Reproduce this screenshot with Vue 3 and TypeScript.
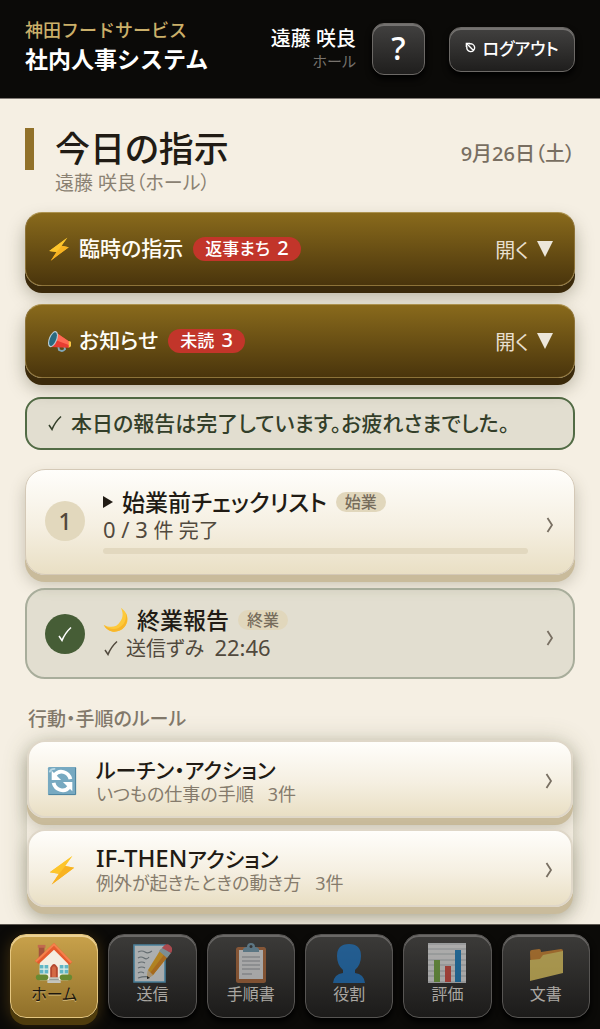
<script setup lang="ts">
import { ref } from 'vue'

interface Part { text: string; latin?: boolean }
interface Notice { icon: string; title: string; badge: string; count: number }
interface Rule { icon: string; title: Part[]; note: string; count: number }
interface Tab { icon: string; label: string }

const notices: Notice[] = [
  { icon: 'bolt', title: '臨時の指示', badge: '返事まち', count: 2 },
  { icon: 'horn', title: 'お知らせ', badge: '未読', count: 3 },
]
const rules: Rule[] = [
  { icon: 'cycle', title: [{ text: 'ルーチン・アクション' }], note: 'いつもの仕事の手順', count: 3 },
  { icon: 'bolt', title: [{ text: 'IF-THEN', latin: true }, { text: 'アクション' }], note: '例外が起きたときの動き方', count: 3 },
]
const tabs: Tab[] = [
  { icon: 'house', label: 'ホーム' },
  { icon: 'memo', label: '送信' },
  { icon: 'clip', label: '手順書' },
  { icon: 'person', label: '役割' },
  { icon: 'chart', label: '評価' },
  { icon: 'folder', label: '文書' },
]
const active = ref<string>('house')
const progress = ref<number>(0)
</script>

<template>
  <svg class="defs" aria-hidden="true">
    <linearGradient id="boltFill" x1="0" y1="0" x2="0" y2="1">
      <stop offset="0" stop-color="#ffd83a" /><stop offset="1" stop-color="#f9a51c" />
    </linearGradient>
    <symbol id="bolt" viewBox="0 0 32 32">
      <path d="M27 1 3 18.500l9.500 1.500L5 31.500l24-18-9.500-1.700z" fill="url(#boltFill)" />
      <path d="M27 1 12.500 20 3 18.500z" fill="#fdc52b" /><path d="M19.500 11.800 29 13.500 5 31.500z" fill="#f8b321" />
    </symbol>
    <symbol id="horn" viewBox="0 0 32 32">
      <path d="m15 23 1 5q5 3 8-1l-1-4" fill="none" stroke="#83a8b8" stroke-width="2.500" />
      <path d="M9 3 30 17q3 5-1 8L5 24z" fill="#e83d32" />
      <path d="M14 6 30 17q2 3 1 5L12 15z" fill="#ff6a54" />
      <ellipse cx="8" cy="13.500" rx="5.500" ry="11.500" transform="rotate(22 8 13.500)" fill="#b9cdd5" />
      <ellipse cx="8" cy="13.500" rx="4" ry="9.700" transform="rotate(22 8 13.500)" fill="#296a80" />
      <path d="m29 16 3 1v6l-3 2z" fill="#f7c343" />
    </symbol>
    <symbol id="moon" viewBox="0 0 32 32">
      <path d="M22 1c9 6 11 17 4 24-7 8-20 7-25-3 8 4 16 3 20-4 4-5 4-11 1-17z" fill="#fdc93b" />
      <path d="M28 7c3 7 2 13-2 18-7 8-20 7-25-3 8 7 17 6 22 1 5-4 6-10 5-16z" fill="#f8b62a" />
    </symbol>
    <symbol id="cycle" viewBox="0 0 32 32">
      <rect x="1" y="1" width="30" height="30" rx="1.500" fill="#77a9c1" />
      <path d="M1.500 30.500h29v-29" fill="none" stroke="#49809b" />
      <path d="M3 6q1-3 5-3" fill="none" stroke="#b9d8e4" stroke-width="2" stroke-linecap="round" />
      <path d="M25 14c-2-8-12-11-17-4M7 18c2 8 12 11 17 4" fill="none" stroke="#fff" stroke-width="4" />
      <path d="M5 5v10h10zM27 27V17H17z" fill="#fff" />
    </symbol>
    <symbol id="house" viewBox="0 0 40 42">
      <path d="M4 3h6v14H4z" fill="#a3523c" /><path d="M3 2h8v3H3z" fill="#c26a4e" />
      <path d="M5 19 20 4l15 16v19H5z" fill="#f4eee1" />
      <path d="M20 0 39 20l-3 3L20 7 4 22l-4-3z" fill="#e65b2e" /><path d="M20 0 39 20l-2 1L20 3 2 20l-2-1z" fill="#f4824c" />
      <path d="M5 23h9v9H5zM26 23h9v9h-9z" fill="#61b6c5" />
      <path d="M9.500 23v9M5 27.500h9M30.500 23v9M26 27.500h9" stroke="#e4f2e9" stroke-width="1.200" />
      <path d="M16 37V26q4-8 8 0v11z" fill="#b5492f" /><path d="M18 36V26q2-3 4 0v10z" fill="#d46a45" />
      <rect x="1" y="33" width="13" height="6" rx="3" fill="#688a32" /><rect x="26" y="33" width="13" height="6" rx="3" fill="#688a32" />
      <path d="M15 36h10v3h2v3H13v-3h2z" fill="#c4c5bd" /><path d="M15 38.500h10" stroke="#8d9490" />
    </symbol>
    <symbol id="memo" viewBox="0 0 40 40">
      <path d="M2 2h31v37H2z" fill="#f6fbfd" stroke="#56aedb" stroke-width="1.600" />
      <path d="M6 9q4-2 7 0t7-1M6 15q3-2 6 0t5-1M6 20q4-2 7 0M6 25q4-2 7 0M6 30q3-2 6 0M6 35q6-2 12-1" stroke="#84929a" stroke-width="1.200" fill="none" />
      <path d="m29 6 8 6-16 20-6 4 1-9z" fill="#ffb51b" /><path d="m34 9 3 3-16 20-3-2z" fill="#ef8f18" />
      <path d="m16 27 5 5-6 4z" fill="#efcfa0" /><path d="m15 33 3 2-3 1z" fill="#222" />
      <path d="m27 8 4-4 8 6-4 5z" fill="#a7c6d0" /><path d="M30 5q4-6 8-2.500 4 3 1 7.500z" fill="#ef5660" />
    </symbol>
    <symbol id="clip" viewBox="0 0 40 40">
      <rect x="5" y="4" width="30" height="36" rx="2.500" fill="#b66b39" /><path d="M8 7h24v29H8z" fill="#f0f1f2" />
      <path d="M11 14h18M11 18h18M11 22h18M11 26h18M11 31h10" stroke="#9aa0a6" stroke-width="1.200" />
      <path d="M12 9V6q1-2 4-2 0-4 4-4t4 4q3 0 4 2v3z" fill="#729eb5" /><circle cx="20" cy="3.500" r="1.500" fill="#333" />
    </symbol>
    <symbol id="person" viewBox="0 0 40 40">
      <path d="M8 13Q8 1 20 1t12 12q0 9-6 14v3q9 1 10 10H4q1-9 10-10v-3q-6-5-6-14z" fill="#1976c9" />
    </symbol>
    <symbol id="chart" viewBox="0 0 40 40">
      <path d="M1 0h38v40H1z" fill="#f3f3f3" /><path d="M1 1h38M1 6h38M1 11h38M1 17h38M1 22h38M1 28h38M1 33h38M1 39h38" stroke="#b9c0c4" />
      <path d="M7 17h6v22H7z" fill="#78ae3f" /><path d="M18 23h6v16h-6z" fill="#e04a3f" /><path d="M28 7h6v32h-6z" fill="#1883c9" />
    </symbol>
    <symbol id="folder" viewBox="0 0 40 40">
      <path d="M4 9q0-2 2-2l7-1q2 0 2 3l20-3q2 0 2 2v20L5 37z" fill="#d9882b" />
      <path d="m4 17 10-1 3-4 20-4v22L4 38z" fill="#eed261" />
    </symbol>
  </svg>

  <div class="page">
    <header class="top">
      <div class="brand">
        <div class="company">神田フードサービス</div>
        <div class="system">社内人事システム</div>
      </div>
      <div class="who">
        <div class="name">遠藤 咲良</div>
        <div class="role">ホール</div>
      </div>
      <button class="dark help" type="button" aria-label="ヘルプ">?</button>
      <button class="dark logout" type="button">
        <svg viewBox="0 0 12 12" aria-hidden="true"><path d="M4.500 2.300A4.300 4.300 0 1 1 2.300 4.500M2 2l7 7M1.500 5.500v-4h4" /></svg>
        ログアウト
      </button>
    </header>

    <main>
      <div class="heading">
        <div>
          <h1>今日の指示</h1>
          <p class="sub">遠藤 咲良（ホール）</p>
        </div>
        <time datetime="09-26">9月26日（土）</time>
      </div>

      <div class="notices">
        <button v-for="n in notices" :key="n.title" class="gold" type="button" aria-expanded="false">
          <svg class="lead" aria-hidden="true"><use :href="'#' + n.icon" /></svg>
          <span class="gold-title">{{ n.title }}</span>
          <span class="badge">{{ n.badge }} <span class="count">{{ n.count }}</span></span>
          <span class="open">開く <svg viewBox="0 0 16 16" aria-hidden="true"><path d="M0 0h16L8 16z" /></svg></span>
        </button>
      </div>

      <p class="status">
        <svg class="tick" viewBox="0 0 16 16" aria-hidden="true"><path d="m2 10 3 4.500Q8 7 14 1.500" /></svg>
        本日の報告は完了しています。お疲れさまでした。
      </p>

      <div class="tasks">
        <button class="task raised" type="button">
          <span class="num">1</span>
          <span class="body">
            <span class="task-title">
              <svg class="play" viewBox="0 0 10 12" aria-hidden="true"><path d="M0 0v12l10-6z" /></svg>
              始業前チェックリスト<span class="tag">始業</span>
            </span>
            <span class="detail"><span><span class="figure">0 / 3 </span>件 完了</span></span>
            <span class="track"><span class="fill" :style="{ width: progress + '%' }"></span></span>
          </span>
          <svg class="chev" viewBox="0 0 8 16" aria-hidden="true"><path d="m1.500 1 4.500 7-4.500 7" /></svg>
        </button>
        <button class="task done" type="button">
          <span class="num ok"><svg class="tick" viewBox="0 0 16 16" aria-hidden="true"><path d="m2 10 3 4.500Q8 7 14 1.500" /></svg></span>
          <span class="body">
            <span class="task-title">
              <svg class="moon" aria-hidden="true"><use href="#moon" /></svg>
              終業報告<span class="tag">終業</span>
            </span>
            <span class="detail"><svg class="tick" viewBox="0 0 16 16" aria-hidden="true"><path d="m2 10 3 4.500Q8 7 14 1.500" /></svg><span>送信ずみ&nbsp; <span class="figure">22:46</span></span></span>
          </span>
          <svg class="chev" viewBox="0 0 8 16" aria-hidden="true"><path d="m1.500 1 4.500 7-4.500 7" /></svg>
        </button>
      </div>

      <section class="rules">
        <h2>行動・手順のルール</h2>
        <div class="list">
          <button v-for="r in rules" :key="r.note" class="rule raised" type="button">
            <svg class="rule-icon" aria-hidden="true"><use :href="'#' + r.icon" /></svg>
            <span class="body">
              <span class="rule-title"><span v-for="p in r.title" :key="p.text" :class="{ latin: p.latin }">{{ p.text }}</span></span>
              <span class="note">{{ r.note }}&nbsp;&nbsp; {{ r.count }}件</span>
            </span>
            <svg class="chev" viewBox="0 0 8 16" aria-hidden="true"><path d="m1.500 1 4.500 7-4.500 7" /></svg>
          </button>
        </div>
      </section>
    </main>

    <nav aria-label="メイン">
      <button v-for="t in tabs" :key="t.icon" type="button" class="tab" :class="{ active: active === t.icon }" @click="active = t.icon">
        <svg aria-hidden="true"><use :href="'#' + t.icon" /></svg>
        <span>{{ t.label }}</span>
      </button>
    </nav>
  </div>
</template>

<style>
body { background: #f5efe3; }
</style>

<style scoped>
* { box-sizing: border-box; }
.defs { position: absolute; width: 0; height: 0; }
.page {
  display: flex; flex-direction: column; min-height: 100vh; background: #f5efe3; color: #211b14;
  font-family: "Noto Sans", "Noto Sans CJK JP", sans-serif; font-feature-settings: "palt";
}
button { font: inherit; font-feature-settings: inherit; color: inherit; cursor: pointer; }
h1, h2, p { margin: 0; }
svg { flex: none; }

.top { display: flex; align-items: center; height: 99px; padding: 0 25px; background: #0b0a08; border-bottom: 1px solid #817b75; }
.brand { flex: 1; padding-bottom: 6px; font-feature-settings: normal; }
.company { font-size: 18px; line-height: 26px; color: #cbb06a; font-weight: 500; }
.system { font-size: 23px; line-height: 32px; color: #fff; font-weight: 700; }
.who { text-align: right; margin-right: 16px; padding-top: 2px; }
.name { font-size: 20px; line-height: 22px; color: #fff; font-weight: 500; }
.role { font-size: 15px; line-height: 22px; color: #77736d; }
.dark {
  border: 1px solid #6c6966; color: #fff; background: linear-gradient(#424140, #1f1e1d);
  box-shadow: inset 0 2px 0 #747270, 0 4px 6px #000; padding: 0;
}
.help { width: 53px; height: 52px; padding-bottom: 2px; border-radius: 12px; font-size: 32px; line-height: 40px; font-weight: 500; margin-right: 24px; }
.logout { display: flex; align-items: center; justify-content: center; gap: 6px; width: 126px; height: 45px; padding-bottom: 4px; border-radius: 12px; font-size: 17px; font-weight: 500; }
.logout svg { width: 11px; height: 11px; fill: none; stroke: #fff; stroke-width: 1.5; }

main { padding: 29px 25px 8px; }
.heading { display: flex; justify-content: space-between; align-items: flex-start; }
h1 { border-left: 9px solid #91712a; padding-left: 21px; font-size: 35px; line-height: 42px; font-weight: 500; }
.sub { padding-left: 30px; font-size: 19px; line-height: 26px; color: #8a8172; }
time { font-size: 20px; line-height: 52px; color: #786e61; font-weight: 500; }

.notices { display: flex; flex-direction: column; gap: 18px; margin-top: 16px; }
.gold {
  display: flex; align-items: center; height: 74px; padding: 0 21px; border: 1px solid #8d7339; border-top-color: #ac924f; border-radius: 17px;
  background: linear-gradient(#896a1c, #4a350c); color: #fffdf6; text-align: left;
  box-shadow: 0 7px 0 #3b2a0b, 0 10px 18px rgba(50, 45, 20, .35);
}
.lead { width: 24px; height: 24px; margin-right: 8px; }
.gold-title { font-size: 21px; line-height: 30px; padding-bottom: 2px; font-weight: 500; }
.badge { margin-left: 10px; padding: 0 12px; border-radius: 12px; background: #c2352a; color: #fff; font-size: 17px; line-height: 24px; font-weight: 500; }
.count { font-size: 20px; line-height: 20px; margin-left: 3px; }
.open { display: flex; align-items: center; gap: 8px; margin-left: auto; color: #e8dfce; font-size: 20px; }
.open svg { width: 16px; height: 16px; fill: #ece6da; }

.status {
  display: flex; align-items: center; gap: 8px; min-height: 53px; margin-top: 19px; padding: 0 20px 2px; border: 2px solid #526b45; border-radius: 16px;
  background: rgba(74, 95, 56, .11); color: #333e29; font-size: 21px; line-height: 30px; font-weight: 500;
}
.tick { width: 16px; height: 16px; fill: none; stroke: currentColor; stroke-width: 1.5; }

.tasks { display: flex; flex-direction: column; gap: 13px; margin-top: 19px; }
.task { display: flex; align-items: center; padding: 14px 20px 14px 19px; border-radius: 20px; text-align: left; }
.raised {
  border: 1px solid #d4c9b7; background: linear-gradient(#fffefb, #f5efe1 55%, #e9dfc4);
  box-shadow: 0 7px 0 #c9bb9b, 0 9px 16px rgba(70, 65, 40, .28);
}
.task.raised { height: 106px; padding-bottom: 16px; }
.done { height: 91px; border: 2px solid #a8ad9b; background: rgba(74, 95, 56, .11); padding: 14px 19px 14px 18px; }
.num { display: flex; align-items: center; justify-content: center; width: 40px; height: 40px; margin-right: 18px; border-radius: 50%; background: #e2d8bd; color: #51483c; font-size: 23px; line-height: 40px; font-weight: 500; }
.ok { background: #465d36; color: #fff; }
.body { flex: 1; min-width: 0; display: flex; flex-direction: column; }
.task-title { display: flex; align-items: center; font-size: 23px; line-height: 28px; font-weight: 500; white-space: nowrap; }
.play { width: 10px; height: 12px; margin-right: 9px; fill: #211b14; }
.moon { width: 26px; height: 26px; margin-right: 8px; }
.tag { margin-left: 9px; padding: 0 9px; border-radius: 10px; background: #e1d7bc; color: #776d5c; font-size: 16px; line-height: 20px; }
.detail { display: flex; align-items: center; gap: 7px; font-size: 20px; line-height: 26px; color: #51493d; }
.figure { font-size: 22px; line-height: 26px; }
.track { height: 6px; margin: 4px 18px 0 0; border-radius: 3px; background: #e2d8bf; overflow: hidden; }
.fill { display: block; height: 6px; background: #465d36; }
.chev { width: 8px; height: 16px; fill: none; stroke: #786f62; stroke-width: 1.8; }
.task .chev { margin-top: 8px; }

.rules { margin: 27px 2px 0; }
h2 { padding-left: 1px; font-size: 19px; line-height: 26px; font-weight: 500; color: #81786a; }
.list { display: flex; flex-direction: column; gap: 11px; margin-top: 8px; padding-bottom: 7px; border-radius: 20px; box-shadow: 0 2px 24px rgba(80, 85, 50, .3); }
.rule { display: flex; align-items: center; height: 78px; padding: 3px 18px 0; border-width: 2px; border-color: #dfd7c8; border-radius: 18px; text-align: left; }
.rule-icon { width: 30px; height: 30px; margin-right: 19px; }
.rule-title { font-size: 21px; line-height: 26px; font-weight: 500; }
.latin { font-size: 24px; line-height: 24px; }
.note { font-size: 18px; line-height: 22px; color: #857b6c; }

nav {
  position: sticky; bottom: 0; z-index: 1; display: grid; grid-template-columns: repeat(6, 1fr); gap: 10px; height: 105px;
  margin-top: auto; padding: 9px 10px 11px; background: #0b0a08; border-top: 1px solid #5c5750;
}
.tab {
  display: flex; flex-direction: column; align-items: center; padding: 8px 0 0; border: 1px solid #575553; border-radius: 16px;
  background: linear-gradient(#3c3b39, #1c1b1a); color: #aaa7a2; box-shadow: inset 0 2px 0 #6a6866, 0 4px 6px #000;
}
.tab svg { width: 40px; height: 40px; opacity: .62; }
.tab span { font-size: 16px; line-height: 23px; }
.tab.active { border-color: #e4c680; background: linear-gradient(#c9a24b, #90702a); color: #1c160d; box-shadow: inset 0 2px 0 #edd294, 0 7px 0 #4f3c0d, 0 4px 16px rgba(180, 130, 30, .35); }
.tab.active svg { opacity: 1; }
.active span { text-shadow: 0 1px 0 #d3b777; }
</style>
